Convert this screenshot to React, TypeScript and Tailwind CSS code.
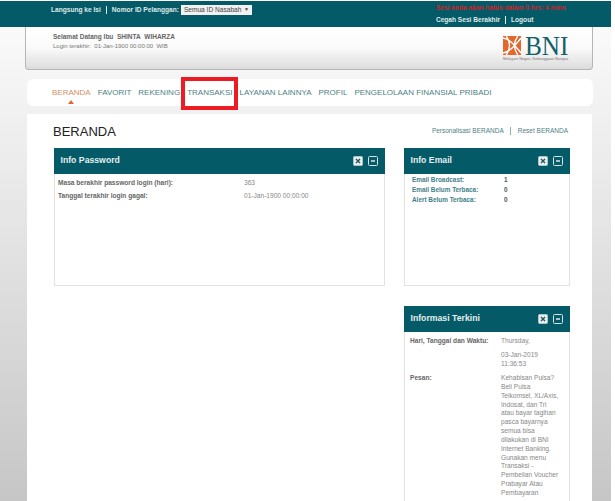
const font = "font-['Liberation_Sans',Arial,sans-serif]";

function Btns() {
  return (
    <div className="flex items-center gap-[5px]">
      <svg width="10" height="10" viewBox="0 0 10 10" className="block">
        <rect x="0.5" y="0.5" width="9" height="9" rx="1" fill="#e6eeee" stroke="#a9c6ca" />
        <path d="M3 3 7 7M7 3 3 7" stroke="#23525a" strokeWidth="1.3" />
      </svg>
      <svg width="10" height="10" viewBox="0 0 10 10" className="block">
        <rect x="0.5" y="0.5" width="9" height="9" rx="1" fill="#045a66" stroke="#d5e4e5" />
        <path d="M3 5H7" stroke="#ffffff" strokeWidth="1.3" />
      </svg>
    </div>
  );
}

function PanelHead({ title }: { title: string }) {
  return (
    <div className="h-[26px] bg-[#045a66] flex items-center justify-between pl-[6.5px] pr-[7px]">
      <span className="text-[8.7px] font-bold text-[#e4efef]">{title}</span>
      <Btns />
    </div>
  );
}

function BniLogo() {
  return (
    <div className="flex flex-col items-start w-[67px]">
      <div className="flex items-center gap-[4px] h-[19px]">
        <svg width="18" height="19" viewBox="0 0 22 19" preserveAspectRatio="none" className="block shrink-0">
          <rect width="22" height="19" fill="#e4672c" />
          <path d="M0 2C8 3 14 9 22 17M0 17C8 16 14 10 22 2M4 0C9 6 9 13 4 19M18 0C13 6 13 13 18 19" stroke="#fff" strokeWidth="1.6" fill="none" />
        </svg>
        <span className="font-['Liberation_Serif',serif] text-[28px] leading-[19px] text-[#14606a] scale-x-90 origin-left">BNI</span>
      </div>
      <span className="text-[3.8px] leading-[6px] mt-[1px] whitespace-nowrap text-[#777]">Melayani Negeri, Kebanggaan Bangsa</span>
    </div>
  );
}

const navItems = ["FAVORIT", "REKENING", "TRANSAKSI", "LAYANAN LAINNYA", "PROFIL", "PENGELOLAAN FINANSIAL PRIBADI"];

const message = ["Kehabisan Pulsa?", "Beli Pulsa", "Telkomsel, XL/Axis,", "Indosat, dan Tri", "atau bayar tagihan", "pasca bayarnya", "semua bisa", "dilakukan di BNI", "Internet Banking.", "Gunakan menu", "Transaksi -", "Pembelian Voucher", "Prabayar Atau", "Pembayaran"];

export default function App() {
  return (
    <div className={`${font} relative w-[615px] h-[501px] overflow-hidden bg-white antialiased`}>
      <div className="w-[611px] h-[501px] bg-gradient-to-b from-[#fdfdfd] via-[#e2e2e2] to-[#c6c6c6] flex flex-col">
        {/* Top bar */}
        <div className="mt-[1px] h-[26px] shrink-0 bg-[#045a66] flex justify-between pl-[51px] pr-[45px] text-[6.6px] font-bold text-[#dfeaea]">
          <div className="flex items-center h-[17px]">
            <span>Langsung ke Isi</span>
            <span className="mx-[5px] w-px h-[8px] bg-[#dfeaea]" />
            <span>Nomor ID Pelanggan:</span>
            <span className="ml-[2px] w-[71px] h-[10px] bg-[#f1f1f1] text-[#444] font-normal whitespace-nowrap flex items-center justify-between pl-[3px] pr-[3px]">
              <span>Semua ID Nasabah</span>
              <span className="text-[5px]">▼</span>
            </span>
          </div>
          <div className="flex flex-col items-start pt-[2px]">
            <span className="text-[#c7252b] h-[9px] leading-[9px]">Sesi anda akan habis dalam 0 hrs: 4 mins</span>
            <div className="flex items-center mt-[3px] h-[9px]">
              <span>Cegah Sesi Berakhir</span>
              <span className="mx-[5px] w-px h-[8px] bg-[#dfeaea]" />
              <span>Logout</span>
            </div>
          </div>
        </div>

        {/* Welcome card */}
        <div className="ml-[25px] mr-[18px] h-[43px] shrink-0 rounded-b-[4px] border-x border-b border-[#b5b5b5] bg-gradient-to-b from-white via-[#fafafa] to-[#dcdcdc] flex justify-between pl-[27px] pr-[22px]">
          <div className="pt-[5px]">
            <div className="text-[6.5px] leading-[9px] font-bold text-[#666]">Selamat Datang Ibu&nbsp; SHINTA&nbsp; WIHARZA</div>
            <div className="text-[6px] leading-[8px] mt-[1px] text-[#777]">Login terakhir:&nbsp; 01-Jan-1900 00:00:00&nbsp; WIB</div>
          </div>
          <div className="pt-[9px]">
            <BniLogo />
          </div>
        </div>

        {/* Nav */}
        <div className="mt-[9px] ml-[27px] mr-[18px] h-[27px] shrink-0 rounded-[6px] bg-white flex items-center pl-[25px] gap-[7px] text-[8px] text-[#4d7f85]">
          <span className="relative text-[#cf9166]">
            BERANDA
            <span className="absolute left-[16px] top-[13px] w-0 h-0 border-x-[3px] border-x-transparent border-b-[4px] border-b-[#e4672c]" />
          </span>
          {navItems.map((n) => (
            <span key={n}>{n}</span>
          ))}
        </div>

        {/* Main */}
        <div className="mt-[8px] ml-[27px] mr-[19px] flex-1 min-h-0 overflow-hidden bg-white pl-[27px] pr-[22px] pt-[9px]">
          <div className="flex items-start justify-between h-[25px]">
            <h1 className="text-[13px] leading-[18px] text-[#222] -ml-[1px]">BERANDA</h1>
            <div className="flex items-center text-[6.5px] text-[#4d7f85] h-[16px] mr-[2px]">
              <span>Personalisasi BERANDA</span>
              <span className="mx-[6.5px] w-px h-[8px] bg-[#8fb0b4]" />
              <span>Reset BERANDA</span>
            </div>
          </div>

          <div className="flex gap-[19px]">
            <div className="w-[331px] shrink-0">
              <div className="h-[138px] border-x border-b border-[#e2e2e2]">
                <div className="-mx-px"><PanelHead title="Info Password" /></div>
                <div className="pl-[3px] pt-[2px] text-[6.6px] leading-[13px]">
                  <div className="flex"><span className="w-[186px] font-bold text-[#666]">Masa berakhir password login (hari):</span><span className="text-[#888]">363</span></div>
                  <div className="flex"><span className="w-[186px] font-bold text-[#666]">Tanggal terakhir login gagal:</span><span className="text-[#888]">01-Jan-1900 00:00:00</span></div>
                </div>
              </div>
            </div>

            <div className="w-[166px] shrink-0 flex flex-col gap-[20px]">
              <div className="h-[138px] border-x border-b border-[#e2e2e2]">
                <div className="-mx-px"><PanelHead title="Info Email" /></div>
                <div className="pl-[7px] pt-[1px] text-[6.4px] leading-[10px] font-bold">
                  <div className="flex"><span className="w-[92px] text-[#3f7f88]">Email Broadcast:</span><span className="text-[#555]">1</span></div>
                  <div className="flex"><span className="w-[92px] text-[#3f7f88]">Email Belum Terbaca:</span><span className="text-[#555]">0</span></div>
                  <div className="flex"><span className="w-[92px] text-[#3f7f88]">Alert Belum Terbaca:</span><span className="text-[#555]">0</span></div>
                </div>
              </div>

              <div className="border-x border-[#e2e2e2] h-[300px]">
                <div className="-mx-px"><PanelHead title="Informasi Terkini" /></div>
                <div className="flex pl-[5px] pt-[4px] text-[6.6px] leading-[9px]">
                  <span className="w-[91px] font-bold text-[#666] shrink-0">Hari, Tanggal dan Waktu:</span>
                  <div className="text-[#888]">
                    <div>Thursday,</div>
                    <div className="mt-[5px]">03-Jan-2019</div>
                    <div>11:36:53</div>
                  </div>
                </div>
                <div className="flex pl-[5px] pt-[6px] text-[6.6px] leading-[8.85px]">
                  <span className="w-[91px] font-bold text-[#666] shrink-0">Pesan:</span>
                  <div className="text-[#888]">
                    {message.map((m) => (
                      <div key={m}>{m}</div>
                    ))}
                  </div>
                </div>
              </div>
            </div>
          </div>
        </div>
      </div>

      {/* Red annotation box */}
      <div className="absolute left-[181px] top-[77px] w-[57px] h-[33px] border-[4px] border-[#ed1c24]" />
    </div>
  );
}
